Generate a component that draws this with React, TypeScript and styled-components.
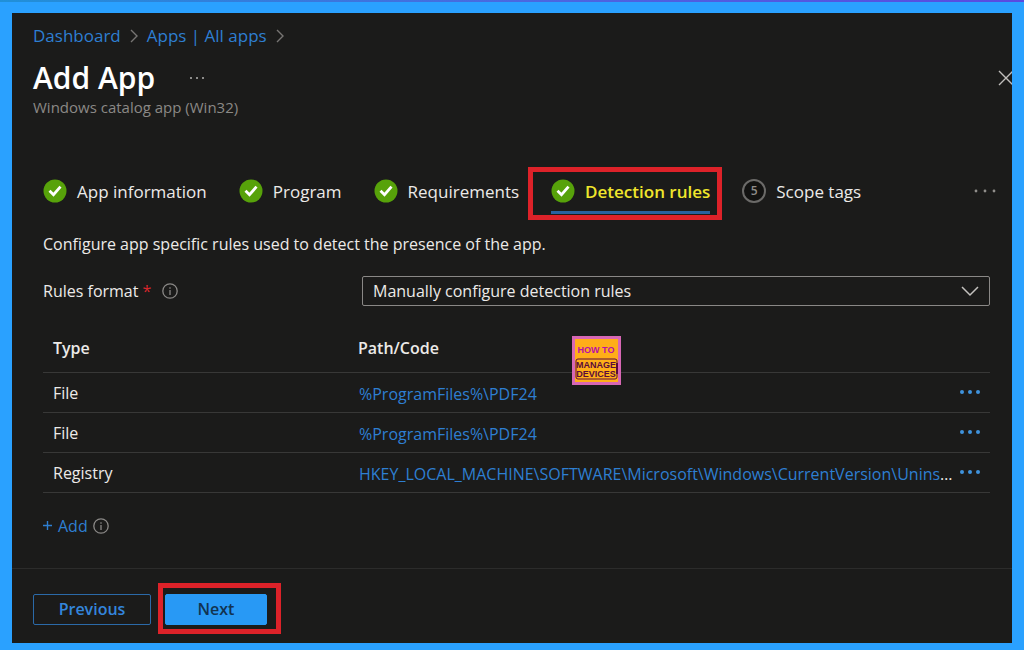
import React from "react";
import styled, { createGlobalStyle, css } from "styled-components";

const color = {
  frame: "#2aa1ff",
  panel: "#1b1b1a",
  text: "#eceae8",
  muted: "#8b8986",
  link: "#2e7fd2",
  line: "#383837",
  mark: "#dd2229",
};

const GlobalStyle = createGlobalStyle`
  *, *::before, *::after { box-sizing: border-box; }
  body {
    margin: 0;
    background: ${color.frame};
    color: ${color.text};
    font: 16px/20px "Open Sans", "Noto Sans", sans-serif;
  }
  button, select { font: inherit; color: inherit; }
  h1, p, ol { margin: 0; padding: 0; }
  a { text-decoration: none; }
`;

const Frame = styled.div`
  display: flex;
  flex-direction: column;
  min-height: 100vh;
  padding: 11px 12px 7px;
  border-top: 2px solid;
  border-image: linear-gradient(90deg, #2090d8, #4a68e0 50%, #5a4ae0) 1;
`;

const Panel = styled.main`
  position: relative;
  flex: 1;
  display: flex;
  flex-direction: column;
  overflow: hidden;
  background: ${color.panel};
`;

const Header = styled.header`
  padding: 11px 0 0 21px;
`;

const Breadcrumbs = styled.nav`
  display: flex;
  align-items: center;
  gap: 9px;
  height: 24px;
  font-size: 17px;
  line-height: 24px;
`;

const Link = styled.a`
  color: ${color.link};
`;

const TitleRow = styled.div`
  display: flex;
  align-items: center;
  height: 38px;
  margin-top: 11px;
`;

const Title = styled.h1`
  font-size: 30px;
  font-weight: 600;
  line-height: 38px;
  color: #fff;
`;

const IconButton = styled.button`
  display: inline-flex;
  align-items: center;
  justify-content: center;
  padding: 0;
  border: 0;
  background: none;
  vertical-align: middle;
  cursor: pointer;
`;

const MoreButton = styled(IconButton)`
  margin-left: 33px;
`;

const CloseButton = styled(IconButton)`
  margin: 0 -2px 0 auto;
`;

const Subtitle = styled.p`
  font-size: 15px;
  color: ${color.muted};
`;

const Body = styled.section`
  padding: 62px 22px 0 31px;
`;

const Steps = styled.ol`
  display: flex;
  align-items: flex-start;
  gap: 32px;
  height: 24px;
  list-style: none;
  font-size: 17px;
  line-height: 26px;
`;

const highlight = css`
  content: "";
  position: absolute;
  border: 5px solid ${color.mark};
  pointer-events: none;
`;

const Step = styled.li<{ $active?: boolean }>`
  position: relative;
  display: flex;
  align-items: flex-start;
  gap: 10px;
  white-space: nowrap;
  ${(p) =>
    p.$active &&
    css`
      color: #f0e62c;
      font-weight: 600;
      &::before {
        content: "";
        position: absolute;
        inset: auto 0 -9px;
        height: 3px;
        background: #27629f;
      }
      &::after {
        ${highlight}
        inset: -12px -12px -15px -23px;
      }
    `}
`;

const MoreSteps = styled.li`
  display: flex;
  align-items: center;
  height: 24px;
  margin: 0 -7px 0 auto;
`;

const Description = styled.p`
  margin-top: 31px;
`;

const Field = styled.div`
  display: flex;
  align-items: center;
  margin-top: 22px;
`;

const FieldLabel = styled.div`
  display: flex;
  align-items: center;
  flex: 0 0 319px;
`;

const Required = styled.span`
  margin: 0 11px 0 4px;
  color: #d9262c;
`;

const SelectBox = styled.div`
  position: relative;
  flex: 1;
  display: flex;
`;

const Select = styled.select`
  appearance: none;
  width: 100%;
  height: 30px;
  padding: 0 40px 0 10px;
  border: 1px solid #8a8886;
  border-radius: 2px;
  background: ${color.panel};
`;

const SelectArrow = styled.svg`
  position: absolute;
  top: 10px;
  right: 11px;
  pointer-events: none;
`;

const Table = styled.table`
  width: 100%;
  margin-top: 19px;
  border-collapse: collapse;
  table-layout: fixed;
`;

const HeadCell = styled.th<{ $width?: string }>`
  width: ${(p) => p.$width ?? "auto"};
  height: 47px;
  padding: 0 10px;
  border-bottom: 1px solid ${color.line};
  font-weight: 600;
  text-align: left;
  & + & { padding: 0; }
`;

const Cell = styled.td`
  height: 40px;
  padding: 2px 10px 0;
  border-bottom: 1px solid ${color.line};
  white-space: nowrap;
  & + & { padding: 4px 0 0 1px; }
  & + & + & { padding: 0 9px 4px 0; text-align: right; }
`;

const AddRow = styled.div`
  display: flex;
  align-items: center;
  gap: 5px;
  margin-top: 23px;
`;

const AddButton = styled(IconButton)`
  gap: 6px;
  color: ${color.link};
  font-weight: 500;
`;

const Footer = styled.footer`
  display: flex;
  gap: 14px;
  margin-top: auto;
  padding: 25px 21px 18px;
  border-top: 1px solid #2c2c2b;
`;

const Button = styled.button<{ $primary?: boolean }>`
  position: relative;
  width: ${(p) => (p.$primary ? 102 : 118)}px;
  height: 31px;
  padding: 0 0 2px;
  border: 1px solid ${(p) => (p.$primary ? "#2899f5" : "#2b6aa8")};
  border-radius: 2px;
  background: ${(p) => (p.$primary ? "#2899f5" : "transparent")};
  color: ${(p) => (p.$primary ? "#123350" : "#3486dc")};
  font-weight: 600;
  cursor: pointer;
  &::after {
    ${(p) => p.$primary && highlight}
    inset: -12px -15px -10px -8px;
  }
`;

const Badge = styled.svg`
  position: absolute;
  left: 56%;
  top: 323px;
`;

const Dots = ({ gap, r, fill }: { gap: number; r: number; fill: string }) => (
  <svg width={gap * 2 + 6} height="6" fill={fill} aria-hidden="true">
    <circle cx="3" cy="3" r={r} />
    <circle cx={3 + gap} cy="3" r={r} />
    <circle cx={3 + gap * 2} cy="3" r={r} />
  </svg>
);

const Chevron = () => (
  <svg width="8" height="14" fill="none" stroke="#777573" strokeWidth="1.4" aria-hidden="true">
    <path d="M1 1l6 6-6 6" />
  </svg>
);

const Info = () => (
  <svg width="16" height="16" fill="none" stroke="#8a8886" strokeWidth="1.3" aria-hidden="true">
    <circle cx="8" cy="8" r="7.2" />
    <path d="M8 7v5M8 4.2v1.5" />
  </svg>
);

const Check = () => (
  <svg width="24" height="24" viewBox="0 0 24 24" fill="none" aria-hidden="true">
    <circle cx="12" cy="12" r="11.5" fill="#57a20a" />
    <path d="M6.5 11.7l4 4 7-8" stroke="#fff" strokeWidth="2.8" />
  </svg>
);

const NumberCircle = styled.span`
  display: grid;
  place-items: center;
  width: 24px;
  height: 24px;
  border: 2px solid #6b6a68;
  border-radius: 50%;
  background: #121211;
  color: #8f8d8a;
  font-size: 12px;
  font-weight: 600;
  line-height: 20px;
`;

const steps = ["App information", "Program", "Requirements", "Detection rules", "Scope tags"];
const activeStep = 3;

const rules = [
  { type: "File", path: "%ProgramFiles%\\PDF24" },
  { type: "File", path: "%ProgramFiles%\\PDF24" },
  {
    type: "Registry",
    path: "HKEY_LOCAL_MACHINE\\SOFTWARE\\Microsoft\\Windows\\CurrentVersion\\Unins",
    cut: true,
  },
];

export default function App() {
  return (
    <>
      <GlobalStyle />
      <Frame>
        <Panel>
          <Header>
            <Breadcrumbs aria-label="Breadcrumb">
              <Link href="#dashboard">Dashboard</Link>
              <Chevron />
              <Link href="#apps">Apps | All apps</Link>
              <Chevron />
            </Breadcrumbs>
            <TitleRow>
              <Title>Add App</Title>
              <MoreButton aria-label="More actions">
                <Dots gap={6} r={1} fill="#b5b3b0" />
              </MoreButton>
              <CloseButton aria-label="Close">
                <svg width="16" height="16" stroke="#c0bebb" strokeWidth="1.4" aria-hidden="true">
                  <path d="M1 1l14 14M15 1L1 15" />
                </svg>
              </CloseButton>
            </TitleRow>
            <Subtitle>Windows catalog app (Win32)</Subtitle>
          </Header>

          <Body>
            <Steps>
              {steps.map((name, i) => (
                <Step key={name} $active={i === activeStep}>
                  {i <= activeStep ? <Check /> : <NumberCircle>{i + 1}</NumberCircle>}
                  {name}
                </Step>
              ))}
              <MoreSteps>
                <IconButton aria-label="More steps">
                  <Dots gap={9} r={1.4} fill="#908e8b" />
                </IconButton>
              </MoreSteps>
            </Steps>

            <Description>
              Configure app specific rules used to detect the presence of the app.
            </Description>

            <Field>
              <FieldLabel>
                <label htmlFor="rules-format">Rules format</label>
                <Required>*</Required>
                <Info />
              </FieldLabel>
              <SelectBox>
                <Select id="rules-format" defaultValue="manual">
                  <option value="manual">Manually configure detection rules</option>
                </Select>
                <SelectArrow width="18" height="11" fill="none" stroke="#c4c2bf" strokeWidth="1.5">
                  <path d="M1 1l8 8 8-8" />
                </SelectArrow>
              </SelectBox>
            </Field>

            <Table>
              <thead>
                <tr>
                  <HeadCell $width="315px">Type</HeadCell>
                  <HeadCell>Path/Code</HeadCell>
                  <HeadCell $width="40px" aria-label="Actions" />
                </tr>
              </thead>
              <tbody>
                {rules.map((rule, i) => (
                  <tr key={i}>
                    <Cell>{rule.type}</Cell>
                    <Cell>
                      <Link href={`#rule-${i + 1}`}>{rule.path}</Link>
                      {rule.cut && "…"}
                    </Cell>
                    <Cell>
                      <IconButton aria-label="Rule actions">
                        <Dots gap={8} r={2} fill="#3f93dc" />
                      </IconButton>
                    </Cell>
                  </tr>
                ))}
              </tbody>
            </Table>

            <AddRow>
              <AddButton>
                <svg width="9" height="9" stroke="currentColor" strokeWidth="1.4" aria-hidden="true">
                  <path d="M4.5 0v9M0 4.5h9" />
                </svg>
                Add
              </AddButton>
              <Info />
            </AddRow>
          </Body>

          <Footer>
            <Button>Previous</Button>
            <Button $primary>Next</Button>
          </Footer>

          <Badge width="49" height="49" viewBox="0 0 49 49" role="img" aria-label="How to manage devices">
            <rect width="49" height="49" fill="#d767b4" />
            <rect x="3" y="3" width="43" height="43" fill="#ffae18" />
            <g fontFamily="'Liberation Sans Narrow', 'Liberation Sans', sans-serif" fontSize="9" fontWeight="700" textAnchor="middle">
              <text x="24" y="17" fill="#b810a8">HOW TO</text>
              <text x="24" y="32" fill="#5a0b3c">MANAGE</text>
              <text x="24" y="41" fill="#5a0b3c">DEVICES</text>
            </g>
            <rect x="4" y="23" width="41" height="20" rx="2" fill="none" stroke="#5a0b3c" />
            <path d="M45 27v11" stroke="#5a0b3c" strokeWidth="2" />
          </Badge>
        </Panel>
      </Frame>
    </>
  );
}
